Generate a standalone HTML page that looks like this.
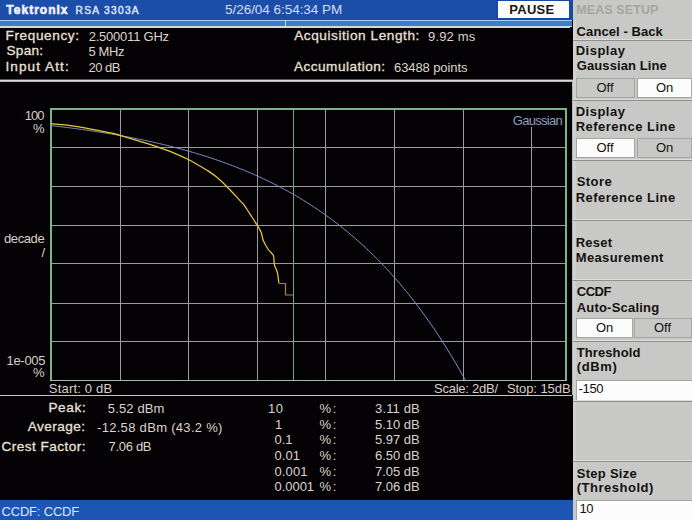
<!DOCTYPE html><html><head><meta charset="utf-8"><style>html,body{margin:0;padding:0;width:692px;height:520px;overflow:hidden;background:#000}body{font-family:"Liberation Sans",sans-serif}</style></head><body><div style='position:absolute;left:0px;top:0px;width:692px;height:520px;background:#040204;'></div>
<div style='position:absolute;left:0px;top:0px;width:573px;height:20px;background:#1b4ea8;'></div>
<div style='position:absolute;left:0px;top:20px;width:572px;height:1px;background:#a8ccf0;'></div>
<div style='position:absolute;left:0px;top:21px;width:572px;height:5px;background:#3a80c8;'></div>
<div style='position:absolute;left:0px;top:26px;width:572px;height:2px;background:#d0d8e2;'></div>
<div style='position:absolute;left:285px;top:20px;width:1px;height:8px;background:#d8d8d8;'></div>
<div style='position:absolute;left:496px;top:0px;width:77px;height:20px;background:#1a48a4;'></div>
<div style='position:absolute;left:498px;top:1px;width:71px;height:17px;background:#fbfbfb;'></div>
<div style='position:absolute;left:6.3px;top:2.8px;height:14px;font-size:12px;line-height:14px;font-weight:bold;color:#f0f2ff;white-space:pre;-webkit-text-stroke:0.6px #f0f2ff;letter-spacing:1.0px'>T<span style='display:inline-block;transform:scale(1.0,1.14);transform-origin:0 11px;margin-left:-0.8px'>ektronix</span></div>
<div style='position:absolute;left:0px;top:79px;width:573px;height:1px;background:#585858;'></div>
<div style='position:absolute;left:0px;top:80px;width:573px;height:1px;background:#d8d8d8;'></div>
<div style='position:absolute;left:0px;top:81px;width:573px;height:1px;background:#b4b4b4;'></div>
<svg style='position:absolute;left:0;top:0' width='692' height='520'><rect x='120' y='110' width='1' height='270' fill='#9c9c9c'/><rect x='188' y='110' width='1' height='270' fill='#9c9c9c'/><rect x='257' y='110' width='1' height='270' fill='#9c9c9c'/><rect x='325' y='110' width='1' height='270' fill='#9c9c9c'/><rect x='394' y='110' width='1' height='270' fill='#9c9c9c'/><rect x='463' y='110' width='1' height='270' fill='#9c9c9c'/><rect x='531' y='110' width='1' height='270' fill='#9c9c9c'/><rect x='52' y='147' width='513' height='1' fill='#9c9c9c'/><rect x='52' y='186' width='513' height='1' fill='#9c9c9c'/><rect x='52' y='225' width='513' height='1' fill='#9c9c9c'/><rect x='52' y='263' width='513' height='1' fill='#9c9c9c'/><rect x='52' y='303' width='513' height='1' fill='#9c9c9c'/><rect x='52' y='341' width='513' height='1' fill='#9c9c9c'/><rect x='293' y='110' width='1' height='270' fill='#70a880'/><rect x='50' y='108' width='517' height='2' fill='#7cb48a'/><rect x='50' y='108' width='2' height='273' fill='#7cb48a'/><rect x='565' y='108' width='2' height='273' fill='#7cb48a'/><rect x='50' y='380' width='517' height='1' fill='#a0bca6'/><polyline fill='none' stroke='#8094cc' stroke-width='1.0' points='51.20,125.64 52.57,125.79 53.94,125.95 55.32,126.11 56.69,126.27 58.06,126.43 59.43,126.59 60.80,126.76 62.18,126.93 63.55,127.09 64.92,127.26 66.29,127.43 67.66,127.61 69.04,127.78 70.41,127.95 71.78,128.13 73.15,128.31 74.52,128.49 75.90,128.67 77.27,128.86 78.64,129.04 80.01,129.23 81.38,129.42 82.76,129.61 84.13,129.80 85.50,130.00 86.87,130.19 88.24,130.39 89.62,130.59 90.99,130.79 92.36,131.00 93.73,131.20 95.10,131.41 96.48,131.62 97.85,131.83 99.22,132.04 100.59,132.26 101.96,132.47 103.34,132.69 104.71,132.91 106.08,133.14 107.45,133.36 108.82,133.59 110.20,133.82 111.57,134.05 112.94,134.28 114.31,134.52 115.68,134.76 117.06,135.00 118.43,135.24 119.80,135.49 121.17,135.73 122.54,135.98 123.92,136.23 125.29,136.49 126.66,136.74 128.03,137.00 129.40,137.26 130.78,137.53 132.15,137.79 133.52,138.06 134.89,138.33 136.26,138.60 137.64,138.88 139.01,139.16 140.38,139.44 141.75,139.72 143.12,140.01 144.50,140.30 145.87,140.59 147.24,140.88 148.61,141.18 149.98,141.48 151.36,141.78 152.73,142.09 154.10,142.40 155.47,142.71 156.84,143.02 158.22,143.34 159.59,143.66 160.96,143.98 162.33,144.30 163.70,144.63 165.08,144.96 166.45,145.30 167.82,145.64 169.19,145.98 170.56,146.32 171.94,146.67 173.31,147.02 174.68,147.37 176.05,147.73 177.42,148.09 178.80,148.45 180.17,148.82 181.54,149.19 182.91,149.56 184.28,149.94 185.66,150.32 187.03,150.71 188.40,151.09 189.77,151.49 191.14,151.88 192.52,152.28 193.89,152.68 195.26,153.09 196.63,153.50 198.00,153.91 199.38,154.33 200.75,154.75 202.12,155.17 203.49,155.60 204.86,156.04 206.24,156.47 207.61,156.91 208.98,157.36 210.35,157.81 211.72,158.26 213.10,158.72 214.47,159.18 215.84,159.65 217.21,160.12 218.58,160.59 219.96,161.07 221.33,161.56 222.70,162.05 224.07,162.54 225.44,163.04 226.82,163.54 228.19,164.04 229.56,164.55 230.93,165.07 232.30,165.59 233.68,166.12 235.05,166.65 236.42,167.18 237.79,167.72 239.16,168.27 240.54,168.82 241.91,169.37 243.28,169.93 244.65,170.50 246.02,171.07 247.40,171.65 248.77,172.23 250.14,172.81 251.51,173.41 252.88,174.00 254.26,174.61 255.63,175.22 257.00,175.83 258.37,176.45 259.74,177.08 261.12,177.71 262.49,178.35 263.86,178.99 265.23,179.64 266.60,180.30 267.98,180.96 269.35,181.62 270.72,182.30 272.09,182.98 273.46,183.67 274.84,184.36 276.21,185.06 277.58,185.76 278.95,186.47 280.32,187.19 281.70,187.92 283.07,188.65 284.44,189.39 285.81,190.14 287.18,190.89 288.56,191.65 289.93,192.41 291.30,193.19 292.67,193.97 294.04,194.76 295.42,195.55 296.79,196.35 298.16,197.16 299.53,197.98 300.90,198.81 302.28,199.64 303.65,200.48 305.02,201.33 306.39,202.19 307.76,203.05 309.14,203.92 310.51,204.80 311.88,205.69 313.25,206.59 314.62,207.49 316.00,208.40 317.37,209.33 318.74,210.26 320.11,211.20 321.48,212.14 322.86,213.10 324.23,214.06 325.60,215.04 326.97,216.02 328.34,217.01 329.72,218.01 331.09,219.03 332.46,220.04 333.83,221.07 335.20,222.11 336.58,223.16 337.95,224.22 339.32,225.29 340.69,226.37 342.06,227.45 343.44,228.55 344.81,229.66 346.18,230.78 347.55,231.91 348.92,233.05 350.30,234.19 351.67,235.36 353.04,236.53 354.41,237.71 355.78,238.90 357.16,240.10 358.53,241.32 359.90,242.55 361.27,243.78 362.64,245.03 364.02,246.29 365.39,247.57 366.76,248.85 368.13,250.14 369.50,251.45 370.88,252.77 372.25,254.10 373.62,255.45 374.99,256.81 376.36,258.18 377.74,259.56 379.11,260.95 380.48,262.36 381.85,263.78 383.22,265.22 384.60,266.66 385.97,268.12 387.34,269.60 388.71,271.09 390.08,272.59 391.46,274.10 392.83,275.63 394.20,277.18 395.57,278.73 396.94,280.31 398.32,281.89 399.69,283.49 401.06,285.11 402.43,286.74 403.80,288.39 405.18,290.05 406.55,291.73 407.92,293.42 409.29,295.13 410.66,296.85 412.04,298.59 413.41,300.35 414.78,302.12 416.15,303.91 417.52,305.72 418.90,307.54 420.27,309.38 421.64,311.23 423.01,313.11 424.38,315.00 425.76,316.90 427.13,318.83 428.50,320.77 429.87,322.73 431.24,324.71 432.62,326.71 433.99,328.73 435.36,330.76 436.73,332.82 438.10,334.89 439.48,336.98 440.85,339.09 442.22,341.22 443.59,343.37 444.96,345.54 446.34,347.74 447.71,349.95 449.08,352.18 450.45,354.43 451.82,356.70 453.20,359.00 454.57,361.31 455.94,363.65 457.31,366.01 458.68,368.39 460.06,370.79 461.43,373.21 462.80,375.66 464.17,378.13 465.54,380.00'/><path fill='none' stroke='#e8c83c' stroke-width='1.25' d='M51,123.7 C55.17,124.13 66.17,124.78 76.00,126.30 C85.83,127.82 102.67,131.28 110.00,132.80 C117.33,134.32 113.33,133.47 120.00,135.40 C126.67,137.33 143.33,142.33 150.00,144.40 C156.67,146.47 156.08,146.40 160.00,147.80 C163.92,149.20 168.77,150.85 173.50,152.80 C178.23,154.75 183.92,157.25 188.40,159.50 C192.88,161.75 197.28,164.50 200.40,166.30 C203.52,168.10 204.40,168.52 207.10,170.30 C209.80,172.08 213.45,174.42 216.60,177.00 C219.75,179.58 222.10,181.87 226.00,185.80 C229.90,189.73 236.98,197.38 240.00,200.60 C243.02,203.82 242.42,202.83 244.10,205.10 C245.78,207.37 247.92,210.83 250.10,214.20 C252.28,217.57 255.35,222.27 257.20,225.30 C259.05,228.33 260.18,229.88 261.20,232.40 C262.22,234.92 262.12,237.55 263.30,240.40 C264.48,243.25 266.62,246.97 268.30,249.50 C269.98,252.03 272.38,253.07 273.40,255.60 C274.42,258.13 273.73,261.85 274.40,264.70 C275.07,267.55 276.67,269.68 277.40,272.70 C278.13,275.72 278.57,281.12 278.80,282.80'/><polyline fill='none' stroke='#a88838' stroke-width='1.2' points='278.8,283.5 285.5,283.5 285.5,295 293,295'/><rect x='509' y='110' width='56' height='17' fill='#040204'/></svg>
<div style='position:absolute;left:0px;top:395px;width:572px;height:1px;background:#c4c4c4;'></div>
<div style='position:absolute;left:0px;top:500px;width:573px;height:20px;background:#1c55b2;'></div>
<div style='position:absolute;left:573px;top:0px;width:119px;height:520px;background:#c8c9c6;'></div>
<div style='position:absolute;left:570px;top:27px;width:3px;height:52px;background:#040204;'></div>
<div style='position:absolute;left:572px;top:82px;width:1px;height:313px;background:#b8b8b8;'></div>
<div style='position:absolute;left:573px;top:20px;width:3px;height:480px;background:#d0d2ce;'></div>
<div style='position:absolute;left:573px;top:39px;width:119px;height:1px;background:#dcdedc;'></div>
<div style='position:absolute;left:573px;top:40px;width:119px;height:1px;background:#8e908e;'></div>
<div style='position:absolute;left:576px;top:78px;width:59px;height:20px;background:#c8c9c6;box-sizing:border-box;border:1px solid #a4a6a4;'></div>
<div style='position:absolute;left:637px;top:78px;width:55px;height:20px;background:#fcfcfc;box-sizing:border-box;border:1px solid #a4a6a4;'></div>
<div style='position:absolute;left:573px;top:99px;width:119px;height:1px;background:#dcdedc;'></div>
<div style='position:absolute;left:573px;top:100px;width:119px;height:1px;background:#8e908e;'></div>
<div style='position:absolute;left:576px;top:138px;width:59px;height:20px;background:#fcfcfc;box-sizing:border-box;border:1px solid #a4a6a4;'></div>
<div style='position:absolute;left:637px;top:138px;width:55px;height:20px;background:#c8c9c6;box-sizing:border-box;border:1px solid #a4a6a4;'></div>
<div style='position:absolute;left:573px;top:159px;width:119px;height:1px;background:#dcdedc;'></div>
<div style='position:absolute;left:573px;top:160px;width:119px;height:1px;background:#8e908e;'></div>
<div style='position:absolute;left:573px;top:219px;width:119px;height:1px;background:#dcdedc;'></div>
<div style='position:absolute;left:573px;top:220px;width:119px;height:1px;background:#8e908e;'></div>
<div style='position:absolute;left:573px;top:279px;width:119px;height:1px;background:#dcdedc;'></div>
<div style='position:absolute;left:573px;top:280px;width:119px;height:1px;background:#8e908e;'></div>
<div style='position:absolute;left:576px;top:318px;width:57px;height:20px;background:#fcfcfc;box-sizing:border-box;border:1px solid #a4a6a4;'></div>
<div style='position:absolute;left:634px;top:318px;width:58px;height:20px;background:#c8c9c6;box-sizing:border-box;border:1px solid #a4a6a4;'></div>
<div style='position:absolute;left:573px;top:340px;width:119px;height:1px;background:#dcdedc;'></div>
<div style='position:absolute;left:573px;top:341px;width:119px;height:1px;background:#8e908e;'></div>
<div style='position:absolute;left:576px;top:380px;width:116px;height:20px;background:#fcfcfc;box-sizing:border-box;border-left:1px solid #a4a6a4;border-top:1px solid #a4a6a4;'></div>
<div style='position:absolute;left:573px;top:400px;width:119px;height:1px;background:#dcdedc;'></div>
<div style='position:absolute;left:573px;top:401px;width:119px;height:1px;background:#8e908e;'></div>
<div style='position:absolute;left:573px;top:460px;width:119px;height:1px;background:#dcdedc;'></div>
<div style='position:absolute;left:573px;top:461px;width:119px;height:1px;background:#8e908e;'></div>
<div style='position:absolute;left:576px;top:500px;width:116px;height:20px;background:#fcfcfc;box-sizing:border-box;border-left:1px solid #a4a6a4;border-top:1px solid #a4a6a4;'></div>
<div style='position:absolute;left:509.30px;top:2.70px;color:#1c1414;font-size:13px;line-height:13px;font-weight:bold;white-space:pre;letter-spacing:0.275px;'>PAUSE</div>
<div style='position:absolute;left:75.50px;top:5.57px;color:#e4e8fa;font-size:10.2px;line-height:10.2px;font-weight:normal;white-space:pre;letter-spacing:1.312px;-webkit-text-stroke:0.4px #e4e8fa;'>RSA 3303A</div>
<div style='position:absolute;left:225.00px;top:2.77px;color:#d4dcf4;font-size:13.5px;line-height:13.5px;font-weight:normal;white-space:pre;letter-spacing:-0.035px;'>5/26/04 6:54:34 PM</div>
<div style='position:absolute;left:5.50px;top:29.29px;color:#e8e0d8;font-size:13.6px;line-height:13.6px;font-weight:normal;white-space:pre;letter-spacing:0.611px;-webkit-text-stroke:0.3px #e8e0d8;'>Frequency:</div>
<div style='position:absolute;left:6.50px;top:44.49px;color:#e8e0d8;font-size:13.6px;line-height:13.6px;font-weight:normal;white-space:pre;letter-spacing:0.275px;-webkit-text-stroke:0.3px #e8e0d8;'>Span:</div>
<div style='position:absolute;left:5.50px;top:60.09px;color:#e8e0d8;font-size:13.6px;line-height:13.6px;font-weight:normal;white-space:pre;letter-spacing:1.056px;-webkit-text-stroke:0.3px #e8e0d8;'>Input Att:</div>
<div style='position:absolute;left:88.70px;top:29.80px;color:#dcd4cc;font-size:13px;line-height:13px;font-weight:normal;white-space:pre;letter-spacing:-0.227px;'>2.500011 GHz</div>
<div style='position:absolute;left:88.50px;top:45.00px;color:#dcd4cc;font-size:13px;line-height:13px;font-weight:normal;white-space:pre;letter-spacing:-0.375px;'>5 MHz</div>
<div style='position:absolute;left:88.50px;top:60.60px;color:#dcd4cc;font-size:13px;line-height:13px;font-weight:normal;white-space:pre;letter-spacing:-0.5px;'>20 dB</div>
<div style='position:absolute;left:294.20px;top:29.29px;color:#e8e0d8;font-size:13.6px;line-height:13.6px;font-weight:normal;white-space:pre;letter-spacing:0.572px;-webkit-text-stroke:0.3px #e8e0d8;'>Acquisition Length:</div>
<div style='position:absolute;left:428.00px;top:29.80px;color:#dcd4cc;font-size:13px;line-height:13px;font-weight:normal;white-space:pre;letter-spacing:0.167px;'>9.92 ms</div>
<div style='position:absolute;left:294.00px;top:60.09px;color:#e8e0d8;font-size:13.6px;line-height:13.6px;font-weight:normal;white-space:pre;letter-spacing:0.475px;-webkit-text-stroke:0.3px #e8e0d8;'>Accumulation:</div>
<div style='position:absolute;left:394.00px;top:60.60px;color:#dcd4cc;font-size:13px;line-height:13px;font-weight:normal;white-space:pre;letter-spacing:-0.091px;'>63488 points</div>
<div style='position:absolute;left:24.80px;top:108.60px;color:#d8d0c8;font-size:13px;line-height:13px;font-weight:normal;white-space:pre;letter-spacing:-1.0px;'>100</div>
<div style='position:absolute;left:33.00px;top:121.80px;color:#d8d0c8;font-size:13px;line-height:13px;font-weight:normal;white-space:pre;letter-spacing:0px;'>%</div>
<div style='position:absolute;left:4.00px;top:231.80px;color:#d8d0c8;font-size:13px;line-height:13px;font-weight:normal;white-space:pre;letter-spacing:-0.4px;'>decade</div>
<div style='position:absolute;left:41.60px;top:245.50px;color:#d8d0c8;font-size:13px;line-height:13px;font-weight:normal;white-space:pre;letter-spacing:0px;'>/</div>
<div style='position:absolute;left:6.50px;top:354.40px;color:#d8d0c8;font-size:13px;line-height:13px;font-weight:normal;white-space:pre;letter-spacing:-0.3px;'>1e-005</div>
<div style='position:absolute;left:33.00px;top:366.20px;color:#d8d0c8;font-size:13px;line-height:13px;font-weight:normal;white-space:pre;letter-spacing:0px;'>%</div>
<div style='position:absolute;left:512.80px;top:113.70px;color:#909cc4;font-size:13px;line-height:13px;font-weight:normal;white-space:pre;letter-spacing:-0.714px;'>Gaussian</div>
<div style='position:absolute;left:48.80px;top:381.60px;color:#d8d0c8;font-size:13px;line-height:13px;font-weight:normal;white-space:pre;letter-spacing:0.2px;'>Start: 0 dB</div>
<div style='position:absolute;left:434.00px;top:382.00px;color:#d8d0c8;font-size:13px;line-height:13px;font-weight:normal;white-space:pre;letter-spacing:-0.24px;'>Scale: 2dB/</div>
<div style='position:absolute;left:506.90px;top:382.00px;color:#d8d0c8;font-size:13px;line-height:13px;font-weight:normal;white-space:pre;letter-spacing:-0.067px;'>Stop: 15dB</div>
<div style='position:absolute;left:48.40px;top:401.39px;color:#e8e0d8;font-size:13.6px;line-height:13.6px;font-weight:normal;white-space:pre;letter-spacing:0.65px;-webkit-text-stroke:0.3px #e8e0d8;'>Peak:</div>
<div style='position:absolute;left:27.70px;top:420.29px;color:#e8e0d8;font-size:13.6px;line-height:13.6px;font-weight:normal;white-space:pre;letter-spacing:0.471px;-webkit-text-stroke:0.3px #e8e0d8;'>Average:</div>
<div style='position:absolute;left:1.40px;top:439.89px;color:#e8e0d8;font-size:13.6px;line-height:13.6px;font-weight:normal;white-space:pre;letter-spacing:0.467px;-webkit-text-stroke:0.3px #e8e0d8;'>Crest Factor:</div>
<div style='position:absolute;left:107.80px;top:401.90px;color:#dcd4cc;font-size:13px;line-height:13px;font-weight:normal;white-space:pre;letter-spacing:0.143px;'>5.52 dBm</div>
<div style='position:absolute;left:97.00px;top:420.80px;color:#dcd4cc;font-size:13px;line-height:13px;font-weight:normal;white-space:pre;letter-spacing:0.306px;'>-12.58 dBm (43.2 %)</div>
<div style='position:absolute;left:108.60px;top:440.40px;color:#dcd4cc;font-size:13px;line-height:13px;font-weight:normal;white-space:pre;letter-spacing:-0.317px;'>7.06 dB</div>
<div style='position:absolute;left:268.00px;top:402.20px;color:#dcd4cc;font-size:13px;line-height:13px;font-weight:normal;white-space:pre;letter-spacing:0.4px;'>10</div>
<div style='position:absolute;left:319.40px;top:402.20px;color:#dcd4cc;font-size:13px;line-height:13px;font-weight:normal;white-space:pre;letter-spacing:1.9px;'>%:</div>
<div style='position:absolute;left:375.00px;top:402.20px;color:#dcd4cc;font-size:13px;line-height:13px;font-weight:normal;white-space:pre;letter-spacing:0.15px;'>3.11 dB</div>
<div style='position:absolute;left:275.00px;top:418.00px;color:#dcd4cc;font-size:13px;line-height:13px;font-weight:normal;white-space:pre;letter-spacing:0px;'>1</div>
<div style='position:absolute;left:319.40px;top:418.00px;color:#dcd4cc;font-size:13px;line-height:13px;font-weight:normal;white-space:pre;letter-spacing:1.9px;'>%:</div>
<div style='position:absolute;left:375.00px;top:418.00px;color:#dcd4cc;font-size:13px;line-height:13px;font-weight:normal;white-space:pre;letter-spacing:-0.017px;'>5.10 dB</div>
<div style='position:absolute;left:274.50px;top:433.40px;color:#dcd4cc;font-size:13px;line-height:13px;font-weight:normal;white-space:pre;letter-spacing:-0.05px;'>0.1</div>
<div style='position:absolute;left:319.40px;top:433.40px;color:#dcd4cc;font-size:13px;line-height:13px;font-weight:normal;white-space:pre;letter-spacing:1.9px;'>%:</div>
<div style='position:absolute;left:375.00px;top:433.40px;color:#dcd4cc;font-size:13px;line-height:13px;font-weight:normal;white-space:pre;letter-spacing:-0.017px;'>5.97 dB</div>
<div style='position:absolute;left:274.50px;top:449.00px;color:#dcd4cc;font-size:13px;line-height:13px;font-weight:normal;white-space:pre;letter-spacing:0.067px;'>0.01</div>
<div style='position:absolute;left:319.40px;top:449.00px;color:#dcd4cc;font-size:13px;line-height:13px;font-weight:normal;white-space:pre;letter-spacing:1.9px;'>%:</div>
<div style='position:absolute;left:375.00px;top:449.00px;color:#dcd4cc;font-size:13px;line-height:13px;font-weight:normal;white-space:pre;letter-spacing:-0.017px;'>6.50 dB</div>
<div style='position:absolute;left:274.50px;top:464.60px;color:#dcd4cc;font-size:13px;line-height:13px;font-weight:normal;white-space:pre;letter-spacing:0.125px;'>0.001</div>
<div style='position:absolute;left:319.40px;top:464.60px;color:#dcd4cc;font-size:13px;line-height:13px;font-weight:normal;white-space:pre;letter-spacing:1.9px;'>%:</div>
<div style='position:absolute;left:375.00px;top:464.60px;color:#dcd4cc;font-size:13px;line-height:13px;font-weight:normal;white-space:pre;letter-spacing:-0.017px;'>7.05 dB</div>
<div style='position:absolute;left:274.50px;top:480.30px;color:#dcd4cc;font-size:13px;line-height:13px;font-weight:normal;white-space:pre;letter-spacing:-0.04px;'>0.0001</div>
<div style='position:absolute;left:319.40px;top:480.30px;color:#dcd4cc;font-size:13px;line-height:13px;font-weight:normal;white-space:pre;letter-spacing:1.9px;'>%:</div>
<div style='position:absolute;left:375.00px;top:480.30px;color:#dcd4cc;font-size:13px;line-height:13px;font-weight:normal;white-space:pre;letter-spacing:-0.017px;'>7.06 dB</div>
<div style='position:absolute;left:1.50px;top:504.80px;color:#dce6fc;font-size:13px;line-height:13px;font-weight:normal;white-space:pre;letter-spacing:-0.189px;'>CCDF: CCDF</div>
<div style='position:absolute;left:576.20px;top:3.52px;color:#a4a4a4;font-size:12.5px;line-height:12.5px;font-weight:bold;white-space:pre;letter-spacing:0.111px;'>MEAS SETUP</div>
<div style='position:absolute;left:576.60px;top:25.10px;color:#141010;font-size:13px;line-height:13px;font-weight:bold;white-space:pre;letter-spacing:0.083px;'>Cancel - Back</div>
<div style='position:absolute;left:575.70px;top:44.40px;color:#141010;font-size:13px;line-height:13px;font-weight:bold;white-space:pre;letter-spacing:0.5px;'>Display</div>
<div style='position:absolute;left:576.70px;top:59.30px;color:#141010;font-size:13px;line-height:13px;font-weight:bold;white-space:pre;letter-spacing:0.108px;'>Gaussian Line</div>
<div style='position:absolute;left:596.50px;top:80.80px;color:#141010;font-size:13px;line-height:13px;font-weight:normal;white-space:pre;letter-spacing:0px;'>Off</div>
<div style='position:absolute;left:656.00px;top:80.80px;color:#141010;font-size:13px;line-height:13px;font-weight:normal;white-space:pre;letter-spacing:0px;'>On</div>
<div style='position:absolute;left:575.70px;top:104.60px;color:#141010;font-size:13px;line-height:13px;font-weight:bold;white-space:pre;letter-spacing:0.5px;'>Display</div>
<div style='position:absolute;left:575.70px;top:120.40px;color:#141010;font-size:13px;line-height:13px;font-weight:bold;white-space:pre;letter-spacing:0.485px;'>Reference Line</div>
<div style='position:absolute;left:596.50px;top:140.80px;color:#141010;font-size:13px;line-height:13px;font-weight:normal;white-space:pre;letter-spacing:0px;'>Off</div>
<div style='position:absolute;left:656.00px;top:140.80px;color:#141010;font-size:13px;line-height:13px;font-weight:normal;white-space:pre;letter-spacing:0px;'>On</div>
<div style='position:absolute;left:576.70px;top:175.30px;color:#141010;font-size:13px;line-height:13px;font-weight:bold;white-space:pre;letter-spacing:0.45px;'>Store</div>
<div style='position:absolute;left:575.70px;top:191.00px;color:#141010;font-size:13px;line-height:13px;font-weight:bold;white-space:pre;letter-spacing:0.485px;'>Reference Line</div>
<div style='position:absolute;left:575.70px;top:235.60px;color:#141010;font-size:13px;line-height:13px;font-weight:bold;white-space:pre;letter-spacing:0.275px;'>Reset</div>
<div style='position:absolute;left:575.70px;top:251.10px;color:#141010;font-size:13px;line-height:13px;font-weight:bold;white-space:pre;letter-spacing:0.38px;'>Measurement</div>
<div style='position:absolute;left:576.70px;top:285.40px;color:#141010;font-size:13px;line-height:13px;font-weight:bold;white-space:pre;letter-spacing:-0.433px;'>CCDF</div>
<div style='position:absolute;left:576.70px;top:301.00px;color:#141010;font-size:13px;line-height:13px;font-weight:bold;white-space:pre;letter-spacing:0.209px;'>Auto-Scaling</div>
<div style='position:absolute;left:596.00px;top:320.80px;color:#141010;font-size:13px;line-height:13px;font-weight:normal;white-space:pre;letter-spacing:0px;'>On</div>
<div style='position:absolute;left:654.00px;top:320.80px;color:#141010;font-size:13px;line-height:13px;font-weight:normal;white-space:pre;letter-spacing:0px;'>Off</div>
<div style='position:absolute;left:576.70px;top:346.00px;color:#141010;font-size:13px;line-height:13px;font-weight:bold;white-space:pre;letter-spacing:0.1px;'>Threshold</div>
<div style='position:absolute;left:576.70px;top:360.00px;color:#141010;font-size:13px;line-height:13px;font-weight:bold;white-space:pre;letter-spacing:0.625px;'>(dBm)</div>
<div style='position:absolute;left:578.50px;top:381.80px;color:#141010;font-size:13px;line-height:13px;font-weight:normal;white-space:pre;letter-spacing:-0.333px;'>-150</div>
<div style='position:absolute;left:576.70px;top:466.60px;color:#141010;font-size:13px;line-height:13px;font-weight:bold;white-space:pre;letter-spacing:0.287px;'>Step Size</div>
<div style='position:absolute;left:576.70px;top:480.70px;color:#141010;font-size:13px;line-height:13px;font-weight:bold;white-space:pre;letter-spacing:0.52px;'>(Threshold)</div>
<div style='position:absolute;left:579.60px;top:501.90px;color:#141010;font-size:13px;line-height:13px;font-weight:normal;white-space:pre;letter-spacing:-0.6px;'>10</div></body></html>
